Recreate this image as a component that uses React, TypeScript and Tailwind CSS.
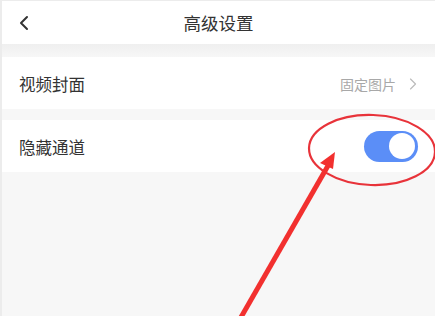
import { ChevronLeft, ChevronRight } from 'lucide-react';

const font = { fontFamily: '"Noto Sans CJK SC", "Noto Sans", sans-serif' };

function Row({ label, children }: { label: string; children?: React.ReactNode }) {
  return (
    <div className="h-[52px] bg-white flex items-center justify-between pl-[17px] pr-[17px] pt-[2px]">
      <span className="text-[16.5px] text-[#333]">{label}</span>
      {children}
    </div>
  );
}

export default function App() {
  return (
    <div className="relative w-[435px] h-[316px] overflow-hidden bg-[#f7f7f7] border-l-2 border-t border-[#ececec]" style={font}>
      <header className="relative h-[43px] bg-white flex items-center justify-center">
        <ChevronLeft className="absolute left-[10px] top-[10px] w-[24px] h-[24px] text-[#333]" strokeWidth={2} />
        <h1 className="text-[17.5px] text-[#333] mt-[2px]">高级设置</h1>
      </header>
      <div className="h-[13px] bg-gradient-to-b from-[#efefef] to-[#f7f7f7]" />
      <Row label="视频封面">
        <div className="flex items-center gap-[7px] -mr-[5px]">
          <span className="text-[14px] text-[#a8a8a8]">固定图片</span>
          <ChevronRight className="w-[20px] h-[24px] text-[#bbb]" strokeWidth={1.4} />
        </div>
      </Row>
      <div className="h-[11px]" />
      <Row label="隐藏通道">
        <div className="w-[54px] h-[31px] rounded-full bg-[#5b8ef7] flex items-center justify-end pr-[3px] -mt-[2px]">
          <div className="w-[26px] h-[26px] rounded-full bg-white" />
        </div>
      </Row>
      <svg className="absolute inset-0 pointer-events-none" width="435" height="316" viewBox="0 0 435 316">
        <ellipse cx="370" cy="149" rx="63" ry="35" fill="none" stroke="#e8333a" strokeWidth="2.2" transform="rotate(2 370 149)" />
        <line x1="238" y1="318" x2="327" y2="163" stroke="#f2302f" strokeWidth="5" />
        <polygon points="333,151 318,162 331,168" fill="#f2302f" />
      </svg>
    </div>
  );
}
